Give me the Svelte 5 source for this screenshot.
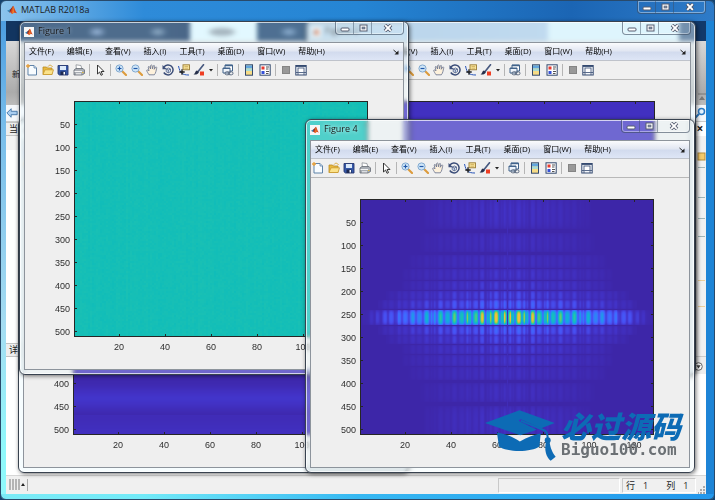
<script lang="ts">
	type Win = { id: string; title: string; left: number; top: number };

	// back to front
	const figures: Win[] = [
		{ id: 'rows', title: 'Figure 3', left: 18, top: 119 },
		{ id: 'flat', title: 'Figure 2', left: 306, top: 21 },
		{ id: 'phase', title: 'Figure 1', left: 19, top: 21 },
		{ id: 'spectrum', title: 'Figure 4', left: 305, top: 119 },
	];

	const menus = ['文件(F)', '编辑(E)', '查看(V)', '插入(I)', '工具(T)', '桌面(D)', '窗口(W)', '帮助(H)'];

	const toolGroups = [
		{ name: 'files', tools: ['new', 'open', 'save', 'print'] },
		{ name: 'edit', tools: ['pointer'] },
		{ name: 'modes', tools: ['zoom-in', 'zoom-out', 'pan', 'rotate', 'cursor', 'brush'] },
		{ name: 'link', tools: ['link'] },
		{ name: 'legend', tools: ['colorbar', 'legend'] },
		{ name: 'dock', tools: ['hide', 'dock'] },
	];

	const W = 294;
	const H = 236;
	const xTicks = [20, 40, 60, 80, 100, 120].map((v) => ({ v, at: Math.round(((v - 0.5) / 128) * W) }));
	const yTicks = [50, 100, 150, 200, 250, 300, 350, 400, 450, 500].map((v) => ({ v, at: Math.round(((v - 0.5) / 512) * H) }));

	const parula = [
		[61, 38, 168], [66, 50, 198], [71, 78, 240], [62, 107, 255], [40, 140, 240],
		[18, 172, 218], [24, 190, 185], [75, 203, 130], [165, 200, 70], [240, 190, 62], [242, 194, 60],
	];

	// offset from the centre row, half height, strength, half extent
	const lobes = [
		[0, 8, 1.08, 146], [13, 5, 0.32, 130], [22, 5, 0.22, 122], [32, 5, 0.17, 106],
		[43, 6, 0.14, 106], [56, 7, 0.11, 100], [75, 10, 0.1, 88], [104, 16, 0.12, 84],
	];

	function colour(v: number) {
		const p = Math.max(0, Math.min(0.999, v)) * 10;
		const i = Math.floor(p);
		return parula[i].map((c, k) => c + (parula[i + 1][k] - c) * (p - i));
	}

	function noise(x: number, y: number) {
		const n = Math.sin(x * 12.9898 + y * 78.233) * 43758.5453;
		return n - Math.floor(n);
	}

	function spectrum(x: number, y: number) {
		const dx = Math.abs(x - 147);
		const dy = Math.abs(y - 118);
		if (dx < 1) return 0.05;
		const comb = Math.sqrt(0.5 + 0.5 * Math.cos(((dx - 4) / 7) * Math.PI * 2));
		const beat = 0.88 + 0.12 * Math.cos(dx * 0.47) - (noise(dx >> 1, 7) > 0.88 ? 0.25 : 0);
		let v = 0;
		for (const [off, half, strength, extent] of lobes) {
			const d = Math.abs(dy - off) / half;
			if (d >= 1 || dx >= extent) continue;
			const fall = Math.pow(1 - dx / extent, off ? 0.6 : 0.85);
			const ripple = off ? 0.4 + 0.6 * comb : 0.38 + 0.62 * comb;
			v = Math.max(v, strength * fall * ripple * beat * Math.sqrt(1 - d * d * d));
		}
		return v;
	}

	function bands(y: number) {
		return 0.065 + 0.045 * Math.sin((y - 190) * 0.17) * (y < 216 ? 1 : 0.3);
	}

	function paint(node: HTMLCanvasElement, kind: string) {
		const ctx = node.getContext('2d')!;
		const img = ctx.createImageData(W, H);
		for (let y = 0; y < H; y++) {
			for (let x = 0; x < W; x++) {
				let rgb: number[];
				if (kind === 'spectrum') {
					rgb = colour(spectrum(x, y));
				} else if (kind === 'phase') {
					const n = noise(x >> 1, y >> 1) * 6 + noise(x >> 1, 3) * 4;
					rgb = [16 + n, 189 + n / 3, 185 - n / 2];
				} else {
					rgb = colour(kind === 'rows' ? bands(y) : 0.08);
				}
				const i = (y * W + x) * 4;
				img.data[i] = rgb[0];
				img.data[i + 1] = rgb[1];
				img.data[i + 2] = rgb[2];
				img.data[i + 3] = 255;
			}
		}
		ctx.putImageData(img, 0, 0);
	}
</script>

{#snippet logo()}
	<svg class="logo" viewBox="0 0 12 12" aria-hidden="true">
		<path d="M0 7 L4 5 L6 7 L3 9Z" fill="#3b86b8" />
		<path d="M4 5 L7.500 1 L6.500 7 L3 9Z" fill="#7c2f2a" />
		<path d="M7.500 1 C9 3 9.500 7 12 10 C10 9 8.500 8.500 6 11 C5.500 9.500 4.500 9 3 9 C5.500 7 6 3 7.500 1Z" fill="#d5431f" />
		<path d="M7.500 1 C8 4 8 7 8.500 8.800 L6 11 C7 8 6.500 4 7.500 1Z" fill="#f08a2c" />
	</svg>
{/snippet}

{#snippet caption(name: string)}
	<div class="caption">
		<button aria-label="Minimize {name}">
			<svg viewBox="0 0 10 8"><rect x="1" y="4" width="8" height="3" rx="1" fill="#fff" stroke="#555d70" /></svg>
		</button>
		<button aria-label="Maximize {name}">
			<svg viewBox="0 0 10 8"><rect x="2" y="1" width="7" height="6" fill="#fff" stroke="#555d70" /><rect x="4" y="3" width="3" height="2" fill="#8090a8" stroke="#555d70" stroke-width=".6" /></svg>
		</button>
		<button class="close" aria-label="Close {name}">
			<svg viewBox="0 0 10 8"><path d="M2 1 L8 7 M8 1 L2 7" stroke="#555d70" stroke-width="3.600" /><path d="M2.200 1.200 L7.800 6.800 M7.800 1.200 L2.200 6.800" stroke="#fff" stroke-width="1.900" /></svg>
		</button>
	</div>
{/snippet}

{#snippet icon(name: string)}
	<svg viewBox="0 0 12 12" aria-hidden="true">
		{#if name === 'new'}
			<path d="M2 1.500 H8 L10.500 4 V11 H2Z" fill="#f8fcff" stroke="#5f83a8" />
			<path d="M8 1.500 V4 H10.500" fill="#cfe2f4" stroke="#5f83a8" stroke-width=".8" />
			<path d="M2 0 V4 M0 2 H4" stroke="#eba23c" stroke-width="1.300" />
		{:else if name === 'open'}
			<path d="M1 10.500 V3 H4.500 L5.500 4 H10 V10.500Z" fill="#e9b93e" stroke="#b98a22" stroke-width=".8" />
			<path d="M1 10.500 L3 5.800 H11.500 L10 10.500Z" fill="#fbe28a" stroke="#c9992e" stroke-width=".8" />
			<path d="M6 2.500 C7.500 .5 9.500 1 10.500 3" fill="none" stroke="#dba634" />
		{:else if name === 'save'}
			<path d="M1 1.500 H11 V11 H2.500 L1 9.800Z" fill="#3558a8" stroke="#26376f" stroke-width=".9" />
			<rect x="3" y="2" width="6" height="4" fill="#dbe9fa" />
			<rect x="3.500" y="7.500" width="5" height="3.500" fill="#1d2850" /><rect x="6.500" y="8" width="1.500" height="2.500" fill="#fff" />
		{:else if name === 'print'}
			<path d="M3.500 6 L3 .8 L8 1.500 L9 6Z" fill="#fff" stroke="#8a8f96" stroke-width=".8" />
			<path d="M1 6 L3 4.500 H10 L11.500 6 V9.500 L9 11 H1Z" fill="#a8adb4" stroke="#656b73" stroke-width=".8" />
			<path d="M1.500 7.500 H9 M3 9.800 H8" stroke="#f4f4f4" /><rect x="9" y="8" width="1.500" height="1" fill="#e0b83c" />
		{:else if name === 'pointer'}
			<path d="M3.500 1 V10 L5.600 8 L7 11.300 L8.500 10.600 L7.100 7.500 H10Z" fill="#fff" stroke="#222" stroke-width=".9" />
		{:else if name === 'zoom-in' || name === 'zoom-out'}
			<path d="M7 7 L11 11" stroke="#dc9b3c" stroke-width="2.200" stroke-linecap="round" />
			<circle cx="4.500" cy="4.500" r="3.600" fill="#cfe6f8" stroke="#82a9cf" />
			<path d={name === 'zoom-in' ? 'M2.500 4.500 H6.500 M4.500 2.500 V6.500' : 'M2.500 4.500 H6.500'} stroke="#2158a8" stroke-width="1.200" />
		{:else if name === 'pan'}
			<path d="M3 10.800 C2 9 .8 7.500 .7 6.300 C1.500 5.500 2.500 6.400 3 7 L2.200 3 C2.600 2 3.500 2.500 3.800 3.300 L4.500 5 L4.600 1.500 C5.200 .6 6 1 6.100 1.700 L6.400 4.800 L7.300 1.800 C8 1 8.700 1.500 8.600 2.300 L8.200 5.300 L9.700 3.200 C10.600 2.700 11 3.500 10.700 4.200 C10 6.500 10 9 8.300 10.800Z" fill="#fdf1dc" stroke="#66708c" stroke-width=".8" />
		{:else if name === 'rotate'}
			<path d="M2 3 A5 5 0 1 1 1.800 8.500" fill="none" stroke="#3b4d78" stroke-width="1.500" />
			<path d="M.5 1 V5.300 H4.800Z" fill="#3b4d78" />
			<path d="M4.200 5 L6.500 4 L8.500 5 V7.700 L6.300 8.800 L4.200 7.700Z M4.200 5 L6.300 6 L8.500 5 M6.300 6 V8.800" fill="#dce8f7" stroke="#3b4d78" stroke-width=".7" />
		{:else if name === 'cursor'}
			<path d="M.5 2 C2 9 4 11 11 11" fill="none" stroke="#2855b8" />
			<rect x="5" y=".8" width="6.500" height="5" fill="#f7e39a" stroke="#9a7c33" stroke-width=".9" />
			<path d="M6.500 2.500 H10 M6.500 4.200 H10" stroke="#c8a552" stroke-width=".7" />
			<path d="M4 5.300 V10.700 M1.300 8 H6.700" stroke="#1b1b1b" stroke-width="1.300" />
		{:else if name === 'brush'}
			<path d="M10.500 .8 L5.500 7" stroke="#48597f" stroke-width="1.700" stroke-linecap="round" />
			<path d="M.5 10.500 C2.500 9.500 1.800 7.300 4 6.500 L6 8 C5 10.500 3 10.800 .5 10.500Z" fill="#26304b" />
			<rect x="7" y="7.500" width="4" height="4" fill="#ee3e23" />
		{:else if name === 'link'}
			<path d="M3 1 H10.500 V7 H3Z" fill="#fff" stroke="#42648c" /><path d="M3 1.500 H10.500" stroke="#42648c" stroke-width="1.500" />
			<path d="M1 4 H8 V9 H1Z" fill="#eef4fb" stroke="#42648c" /><path d="M1 4.500 H8" stroke="#42648c" />
			<rect x="3" y="7.800" width="4.500" height="3" rx="1.500" fill="none" stroke="#5c6a80" /><rect x="6.500" y="7.800" width="4.500" height="3" rx="1.500" fill="none" stroke="#5c6a80" />
		{:else if name === 'colorbar'}
			<rect x="2.500" y=".8" width="7" height="10.400" fill="#f7dc86" stroke="#33496d" />
			<rect x="3" y="1.300" width="6" height="3.200" fill="#63a6df" /><rect x="3" y="4.500" width="6" height="2.500" fill="#a9dcd4" />
		{:else if name === 'legend'}
			<rect x="1" y=".8" width="10.200" height="10.400" fill="#fff" stroke="#33496d" />
			<rect x="2.500" y="2.500" width="3" height="3" fill="#e8392e" /><rect x="2.500" y="7" width="3" height="3" fill="#3450d8" />
			<path d="M7 3 H10 M7 5 H9.500 M7 7.500 H10 M7 9.500 H9.500" stroke="#555" />
		{:else if name === 'hide'}
			<rect x="2.500" y="2.500" width="7" height="7" fill="#999" stroke="#858585" />
		{:else}
			<rect x=".8" y="1.500" width="10.400" height="9.500" fill="#f5f8fc" stroke="#354a70" />
			<path d="M1 2.200 H11" stroke="#354a70" stroke-width="1.400" />
			<rect x="3" y="4" width="6" height="4.500" fill="#fff" stroke="#354a70" stroke-width=".8" />
			<path d="M1 8.500 H3 M9 8.500 H11 M3 9 V11 M9 9 V11" stroke="#354a70" stroke-width=".8" />
		{/if}
	</svg>
{/snippet}

<main class="matlab">
	<header class="app-title">
		{@render logo()}
		<span>MATLAB R2018a</span>
		{@render caption('MATLAB')}
	</header>

	<div class="client">
		<div class="tabs"></div>
		<div class="ribbon">
			<span class="new-script">新</span>
			<svg class="collapse" viewBox="0 0 8 8" aria-hidden="true"><path d="M0 1 H8" stroke="#777" /><path d="M1 7 L4 3 L7 7Z" fill="#777" /></svg>
		</div>
		<div class="address">
			<svg viewBox="0 0 14 12" aria-hidden="true"><path d="M1 6 L6 1 V4 H13 V8 H6 V11Z" fill="#a9cdf0" stroke="#3b6ea3" /></svg>
			<svg viewBox="0 0 12 12" aria-hidden="true"><path d="M5 7 L1 11" stroke="#2b7bc4" stroke-width="2" /><circle cx="7.500" cy="4.500" r="3" fill="#e7f4ff" stroke="#2b7bc4" stroke-width="1.500" /></svg>
		</div>
		<div class="workspace">
			<aside class="folders">
				<h2>当</h2>
				<div class="files"></div>
				<h2>详</h2>
				<div class="details"></div>
			</aside>
			<aside class="gutter">
				<button class="panel-close" aria-label="Close panel">×</button>
				<div class="marks">
					<svg viewBox="0 0 9 220" aria-hidden="true">
						<rect x="1" y="17" width="7" height="7" fill="#f4ca6a" stroke="#b58d3c" />
						<path d="M1 31.500 H8 M1 61.500 H8 M1 82.500 H8 M1 100.500 H8" stroke="#a0b5b8" />
						<path d="M1 144.500 H8 M1 170.500 H8" stroke="#eccf9c" />
					</svg>
				</div>
				<div class="fold">
					<svg viewBox="0 0 9 9" aria-hidden="true"><circle cx="4.500" cy="4.500" r="3.800" fill="#fff" stroke="#666" /><path d="M2.300 3.200 H6.700 L4.500 6.500Z" fill="#444" /></svg>
				</div>
			</aside>
		</div>
		<footer class="status">
			<svg class="busy" viewBox="0 0 18 12" aria-hidden="true"><path d="M1 0 V11 M4 0 V11 M7 0 V11 M10 0 V11" stroke="#b4b4b4" stroke-width="2" /><path d="M12 7 L14 4 L16 7Z" fill="#222" /></svg>
			<div class="message"></div>
			<div class="position"><span>行</span><span>1</span><span class="col">列</span><span>1</span></div>
			<svg class="grip" viewBox="0 0 8 8" aria-hidden="true"><path d="M6 0 V2 M6 3 V5 M6 6 V8 M3 3 V5 M3 6 V8 M0 6 V8" stroke="#aaa" stroke-width="2" /></svg>
		</footer>
	</div>

	{#each figures as fig (fig.id)}
		<section class="figure {fig.id}" style="left: {fig.left}px; top: {fig.top}px" aria-label={fig.title}>
			<header class="figure-title">
				<span class="logo-box">{@render logo()}</span>
				<span class="name">{fig.title}</span>
				{@render caption(fig.title)}
			</header>
			<div class="figure-client">
				<nav class="menubar">
					{#each menus as menu}
						<button>{menu}</button>
					{/each}
					<svg class="undock" viewBox="0 0 6 6" aria-hidden="true"><path d="M.5 1 L4 4" stroke="#222" /><path d="M5.500 1.500 V5.500 H1.500Z" fill="#222" /></svg>
				</nav>
				<div class="toolbar">
					{#each toolGroups as group}
						<div class="group {group.name}">
							{#each group.tools as tool}
								<button aria-label={tool}>{@render icon(tool)}</button>
							{/each}
							{#if group.name === 'modes'}
								<button class="drop" aria-label="brush colour"><svg viewBox="0 0 4 12" aria-hidden="true"><path d="M0 5 H4 L2 7.500Z" fill="#222" /></svg></button>
							{/if}
						</div>
					{/each}
				</div>
				<div class="plot">
					<canvas width={W} height={H} use:paint={fig.id}></canvas>
					<svg class="axes" viewBox="0 0 350 262" aria-hidden="true">
						<g transform="translate(50 2)">
							<rect x=".5" y=".5" width={W - 1} height={H - 1} fill="none" stroke="#262626" />
							{#each xTicks as t}
								<path d="M{t.at + 0.5} 0 v3 M{t.at + 0.5} {H} v-3" stroke="#262626" />
								<text x={t.at} y={H + 13} text-anchor="middle">{t.v}</text>
							{/each}
							{#each yTicks as t}
								<path d="M0 {t.at + 0.5} h3 M{W} {t.at + 0.5} h-3" stroke="#262626" />
								<text x="-4" y={t.at + 4} text-anchor="end">{t.v}</text>
							{/each}
						</g>
					</svg>
				</div>
			</div>
		</section>
	{/each}

	<div class="watermark">
		<svg viewBox="0 0 214 155" aria-hidden="true">
			<path d="M36 70 C58 74 84 82 105 97 C128 84 150 76 168 72 L164 112 C140 130 66 130 42 112Z" fill="#0d6bb5" />
			<path d="M0 41 L104 3 L210 41 L168 58 L110 31 C104 29 100 33 104 36 L156 62 L106 78Z" fill="#0d6bb5" />
			<path d="M108 34 L180 64 C188 68 189 76 189 90" fill="none" stroke="#0d6bb5" stroke-width="6" />
			<circle cx="189" cy="93" r="9" fill="#0d6bb5" />
			<path d="M184 98 H195 C196 116 204 132 213 143 L198 155 C184 144 178 122 184 98Z" fill="#0d6bb5" />
		</svg>
		<div class="brand">
			<strong>必过源码</strong>
			<span>Biguo100.com</span>
		</div>
	</div>
</main>

<style>
	:global(body) {
		margin: 0;
		background: #16436f;
	}

	.matlab {
		--ui: 'Open Sans', 'Noto Sans CJK SC', sans-serif;
		position: relative;
		display: flex;
		flex-direction: column;
		box-sizing: border-box;
		height: 100vh;
		overflow: hidden;
		padding: 0 8px 5px 5px;
		border: 1px solid #294a6b;
		border-radius: 6px;
		background:
			linear-gradient(90deg, #8cc4ed, #2e8bd9 20%, #2585d4 50%, #1b65b4 80%, #2e7bc8) top / 100% 20px no-repeat,
			linear-gradient(90deg, #7beaf6, #72eaf8 20%, #36b8f2 50%, #2297ec) bottom / 100% 5px no-repeat,
			linear-gradient(90deg, transparent 50%, #1d84d6 50%),
			linear-gradient(#4598de, #77bcea 25%, #a5dcf2 65%, #8ff8fb 90%);
		font-family: var(--ui);
		color: #1c1c1c;
	}

	button {
		padding: 0;
		border: 0;
		background: none;
		font: inherit;
		color: inherit;
	}

	svg {
		display: block;
	}

	.app-title {
		display: flex;
		flex: none;
		gap: 4px;
		height: 20px;
		padding-left: 1px;
		font-size: 9px;
		line-height: 18px;
	}

	.logo {
		width: 10px;
		height: 10px;
	}

	.app-title > .logo {
		margin-top: 4px;
	}

	.caption {
		display: flex;
		height: 12px;
		margin-left: auto;
		border: 1px solid rgba(60, 75, 95, 0.6);
		border-top: 0;
		border-radius: 0 0 4px 4px;
		box-shadow: inset 0 0 0 1px rgba(255, 255, 255, 0.4);
	}

	.caption button {
		display: grid;
		place-items: center;
		width: 18px;
		border-right: 1px solid rgba(60, 75, 95, 0.45);
	}

	.caption .close {
		width: 31px;
		border-right: 0;
	}

	.caption svg {
		width: 10px;
		height: 8px;
	}

	.client {
		display: flex;
		flex: 1;
		flex-direction: column;
		min-height: 0;
		background: #fff;
	}

	.tabs {
		flex: none;
		height: 20px;
		background:
			radial-gradient(10px 5px at 91px 11px, #8fb0df, transparent),
			radial-gradient(10px 5px at 152px 11px, #7d9fc0, transparent),
			radial-gradient(16px 5px at 216px 11px, #8c9aa6 60%, transparent),
			radial-gradient(10px 5px at 283px 11px, #7ba3cf, transparent),
			linear-gradient(90deg, #123560 0 140px, #0c2d5a 183px, #dff7ff 185px 250px, #123a68 252px 300px, #8db3d8 302px, #9dbfe2 540px, #d4f1fb 544px 672px, #12396a 674px);
	}

	.ribbon {
		display: flex;
		flex: none;
		align-items: center;
		justify-content: space-between;
		height: 64px;
		padding-left: 6px;
		background: linear-gradient(#d8d8d8, #ababab 80%, #bcbcbc);
		font-size: 8px;
	}

	.collapse {
		width: 8px;
		height: 8px;
		align-self: flex-end;
		margin-bottom: 4px;
	}

	.address {
		display: flex;
		flex: none;
		align-items: center;
		justify-content: space-between;
		height: 17px;
		background: #f4f7fb;
		border-bottom: 1px solid #ccc;
		box-sizing: border-box;
	}

	.address svg {
		width: 12px;
		height: 12px;
	}

	.workspace {
		display: flex;
		flex: 1;
		justify-content: space-between;
		min-height: 0;
	}

	.folders {
		display: flex;
		flex-direction: column;
		width: 20px;
	}

	.folders h2 {
		flex: none;
		height: 12px;
		margin: 0;
		padding-left: 3px;
		border: 1px solid #c4c4c4;
		border-width: 1px 0;
		background: #eee;
		font-size: 9px;
		font-weight: 400;
		line-height: 12px;
	}

	.files {
		flex: 208;
		background: linear-gradient(#f3f3f3 14px, #fff 14px);
	}

	.details {
		flex: 118;
	}

	.gutter {
		display: flex;
		flex-direction: column;
		width: 12px;
	}

	.panel-close {
		height: 14px;
		font-size: 12px;
		font-weight: 700;
		line-height: 12px;
	}

	.marks {
		height: 220px;
		background: #f1f1f1;
	}

	.marks svg {
		width: 9px;
		height: 220px;
		margin-left: auto;
	}

	.fold {
		height: 17px;
		border-top: 1px solid #ccc;
		background: #eee;
	}

	.fold svg {
		width: 9px;
		height: 9px;
		margin-top: 5px;
	}

	.status {
		display: flex;
		flex: none;
		align-items: center;
		gap: 2px;
		height: 18px;
		padding-left: 3px;
		background: #f0f0f0;
		border-top: 1px solid #d6d6d6;
		font-size: 9px;
	}

	.busy {
		width: 18px;
		height: 12px;
		margin-right: auto;
		border-right: 1px solid #aaa;
	}

	.message,
	.position {
		box-sizing: border-box;
		height: 15px;
		border: 1px solid #c9c9c9;
		border-right-color: #fff;
		border-bottom-color: #fff;
		line-height: 13px;
	}

	.message {
		width: 122px;
	}

	.position {
		display: flex;
		gap: 8px;
		width: 74px;
		padding-left: 3px;
	}

	.col {
		margin-left: 10px;
	}

	.grip {
		width: 8px;
		height: 8px;
		align-self: flex-end;
	}

	/* figure windows */
	.figure {
		position: absolute;
		box-sizing: border-box;
		width: 390px;
		/* the parent's border shifts the origin by one */
		margin: -1px;
		padding: 0 4px 4px;
		border: 1px solid #38424f;
		border-radius: 6px;
		background: rgba(236, 251, 255, 0.45);
		backdrop-filter: blur(2px);
		box-shadow: inset 0 0 0 1px rgba(255, 255, 255, 0.7), 1px 1px 4px rgba(0, 0, 0, 0.55);
	}

	.figure.phase,
	.figure.spectrum {
		background: rgba(232, 250, 255, 0.28);
	}

	.figure-title {
		display: flex;
		gap: 4px;
		height: 20px;
		font-size: 9px;
		line-height: 18px;
	}

	.logo-box {
		display: grid;
		place-items: center;
		width: 10px;
		height: 10px;
		margin-top: 5px;
		background: #f6f6f6;
	}

	.logo-box .logo {
		width: 8px;
		height: 8px;
	}

	.name {
		text-shadow: 0 0 4px rgba(255, 255, 255, 0.6);
	}

	.figure-client {
		border: 1px solid #8d949c;
		box-sizing: border-box;
		background: #efefef;
	}

	.menubar {
		display: flex;
		gap: 13px;
		height: 17px;
		padding: 0 4px;
		background: linear-gradient(#fafbfd, #e2e7f2 45%, #d2dbee 55%, #dee6f6);
		border-bottom: 1px solid #bfc3cb;
		font-size: 8px;
		line-height: 14px;
		white-space: nowrap;
	}

	.menubar button {
		height: 15px;
		color: #000;
	}

	.undock {
		width: 6px;
		height: 6px;
		margin: 6px 0 0 auto;
	}

	.toolbar {
		display: flex;
		align-items: center;
		height: 18px;
		border-bottom: 1px solid #b8b8b8;
		background: #f0f0f0;
	}

	.group {
		display: flex;
		justify-content: space-between;
		padding: 0 4px;
		border-right: 1px solid #b5b5b5;
	}

	.group:last-child {
		border-right: 0;
	}

	.group svg {
		width: 12px;
		height: 12px;
	}

	.group .drop svg {
		width: 4px;
	}

	.files.group {
		flex: none;
		width: 59px;
		padding: 0 4px 0 1px;
		background: none;
	}

	.modes {
		width: 98px;
	}

	.legend {
		width: 28px;
	}

	.dock {
		width: 27px;
	}

	.plot {
		position: relative;
		padding: 21px 0 32px 49px;
	}

	.plot canvas {
		display: block;
		width: 294px;
		height: 236px;
	}

	.axes {
		position: absolute;
		top: 19px;
		left: -1px;
		width: 350px;
		height: 262px;
		font: 9px 'Liberation Sans', Arial, sans-serif;
		fill: #2e2e2e;
	}

	.spectrum .name {
		text-shadow: 0 0 4px #fff;
	}

	.watermark {
		position: absolute;
		right: 33px;
		bottom: 38px;
		display: flex;
		align-items: flex-start;
		gap: 5px;
	}

	.watermark svg {
		width: 71px;
		height: 52px;
	}

	.brand {
		display: flex;
		flex-direction: column;
	}

	.brand strong {
		font: italic 900 30px/32px 'Noto Sans CJK SC', sans-serif;
		color: #0d6bb5;
	}

	.brand span {
		font: 700 16px/18px 'DejaVu Sans Mono', monospace;
		color: #6b7074;
	}
</style>
